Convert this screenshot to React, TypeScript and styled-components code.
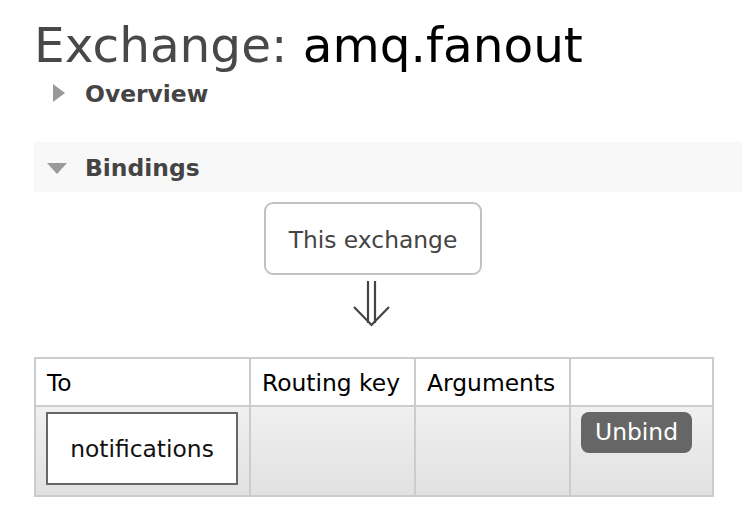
import React from 'react';
import styled, { createGlobalStyle } from 'styled-components';

const Global = createGlobalStyle`
  html, body { margin: 0; padding: 0; background: #fff; }
  body { font-family: "DejaVu Sans", Verdana, sans-serif; color: #484848; }
`;

const Page = styled.div`
  padding-left: 34px;
`;

const Title = styled.h1`
  margin: 0;
  padding-top: 16px;
  font-size: 48.5px;
  font-weight: normal;
  line-height: 58px;
  color: #484848;
  white-space: nowrap;
`;

const Name = styled.span`
  color: #000;
`;

const SectionToggle = styled.div<{ $open?: boolean }>`
  display: flex;
  align-items: center;
  gap: ${p => (p.$open ? '18px' : '20px')};
  font-size: 23.4px;
  font-weight: bold;
  color: #444;
  height: ${p => (p.$open ? '50px' : '30px')};
  margin-top: ${p => (p.$open ? '34px' : '4px')};
  padding-left: ${p => (p.$open ? '13px' : '19px')};
  background: ${p => (p.$open ? '#f8f8f8' : 'transparent')};
`;

const TriRight = styled.span`
  width: 0;
  height: 0;
  border-top: 9px solid transparent;
  border-bottom: 9px solid transparent;
  border-left: 12px solid #9a9a9a;
  margin-top: -1px;
`;

const TriDown = styled.span`
  width: 0;
  height: 0;
  border-left: 10px solid transparent;
  border-right: 10px solid transparent;
  border-top: 11px solid #9a9a9a;
  margin-top: 2px;
`;

const Label = styled.span`
  line-height: 30px;
  padding-top: 1px;
`;

const Content = styled.div`
  width: 678px;
  display: flex;
  flex-direction: column;
  align-items: center;
`;

const ExchangeBox = styled.div`
  margin-top: 10px;
  box-sizing: border-box;
  width: 218px;
  height: 73px;
  border: 2px solid #c2c2c2;
  border-radius: 9px;
  display: flex;
  align-items: center;
  justify-content: center;
  font-size: 23.4px;
  color: #444;
  padding-top: 2px;
`;

const Arrow = styled.svg`
  display: block;
  margin-top: 3px;
  margin-left: -2px;
`;

const Table = styled.table`
  margin-top: 29px;
  width: 678px;
  table-layout: fixed;
  border-collapse: collapse;
  border: 2px solid #cccccc;
  font-size: 23.4px;
  color: #000;
`;

const Th = styled.th<{ $w: number }>`
  box-sizing: border-box;
  width: ${p => p.$w}px;
  border: 2px solid #cccccc;
  padding: 10px 11px 8px;
  line-height: 28px;
  font-weight: normal;
  text-align: left;
  white-space: nowrap;
  background: #fff;
`;

const Td = styled.td`
  border: 2px solid #cccccc;
  padding: 5px 9px 10px 10px;
  vertical-align: top;
  background: linear-gradient(#f0f0f0, #e1e1e1);
`;

const TargetBox = styled.div`
  box-sizing: border-box;
  width: 192px;
  height: 73px;
  border: 2px solid #666;
  background: #fff;
  display: flex;
  align-items: center;
  justify-content: center;
  color: #111;
`;

const Button = styled.button`
  font-family: inherit;
  font-size: 23.4px;
  color: #fff;
  background: #666;
  border: none;
  border-radius: 8px;
  width: 111px;
  height: 41px;
  padding: 0;
  line-height: 41px;
`;

export default function App() {
  return (
    <Page>
      <Global />
      <Title>
        Exchange: <Name>amq.fanout</Name>
      </Title>
      <SectionToggle>
        <TriRight />
        <Label>Overview</Label>
      </SectionToggle>
      <SectionToggle $open>
        <TriDown />
        <Label>Bindings</Label>
      </SectionToggle>
      <Content>
        <ExchangeBox>This exchange</ExchangeBox>
        <Arrow width="40" height="50" viewBox="0 0 40 50">
          <g stroke="#444" strokeWidth="2.2" fill="none">
            <line x1="16" y1="3" x2="16" y2="45" />
            <line x1="23" y1="3" x2="23" y2="45" />
            <polyline points="2,29 19.5,47 37,29" />
          </g>
        </Arrow>
      </Content>
      <Table>
        <thead>
          <tr>
            <Th $w={215}>To</Th>
            <Th $w={165}>Routing key</Th>
            <Th $w={155}>Arguments</Th>
            <Th $w={143}></Th>
          </tr>
        </thead>
        <tbody>
          <tr>
            <Td>
              <TargetBox>notifications</TargetBox>
            </Td>
            <Td></Td>
            <Td></Td>
            <Td>
              <Button>Unbind</Button>
            </Td>
          </tr>
        </tbody>
      </Table>
    </Page>
  );
}
